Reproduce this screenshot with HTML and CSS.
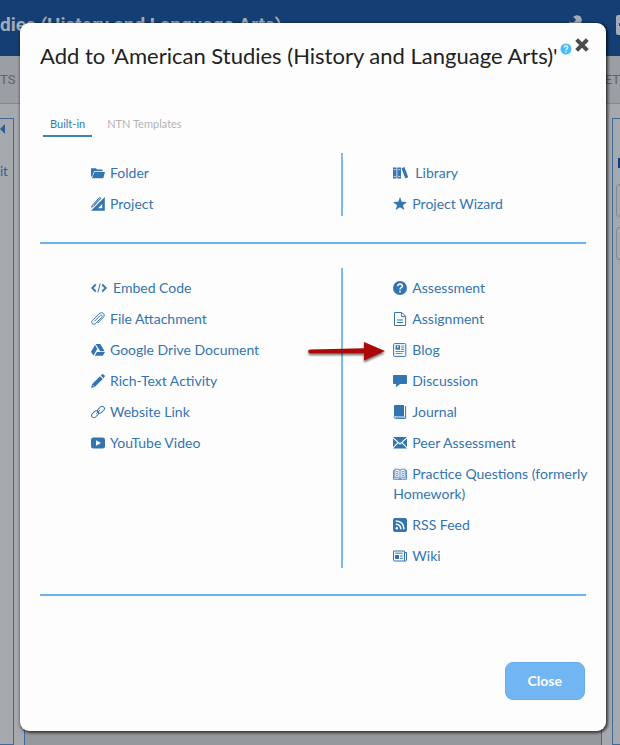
FILE: index.html
```html
<!DOCTYPE html>
<html lang="en">
<head>
<meta charset="utf-8">
<title>Add to course</title>
<link rel="stylesheet" href="styles.css">
</head>
<body>
<div class="page">
  <header class="topbar">
    <span class="course">dies (History and Language Arts)</span>
    <svg class="wrench" viewBox="0 0 18 18"><path d="M1 7Q3 9 6 8L8 6Q7 4 5 3 8 0 12 2 15 5 13 9L17 14 14 17 8 11Q2 12 1 7Z"/></svg>
    <svg class="tool" viewBox="0 0 18 20"><rect width="18" height="20" rx="2"/><path class="cut" d="M3 8h12v3H3z"/></svg>
  </header>
  <nav class="subnav"><span>TS</span><span>ET</span></nav>
  <div class="columns">
    <aside class="panel panel-left">
      <svg class="collapse" viewBox="0 0 6 12"><path d="M6 0v12L0 6z"/></svg>
      <span class="edit">it</span>
    </aside>
    <main class="panel panel-main"></main>
    <aside class="panel panel-right"><i class="mark"></i><i class="field"></i><i class="field"></i></aside>
  </div>
</div>

<div class="overlay">
  <section class="modal" role="dialog" aria-labelledby="dialog-title">
    <div class="modal-head">
      <h1 id="dialog-title">Add to 'American Studies (History and Language Arts)'</h1>
      <a class="help" href="#" aria-label="Help"><svg viewBox="0 0 12 12"><circle cx="6" cy="6" r="5.5"/><path class="line-white" d="M4.2 4.6C4.2 2.4 7.8 2.4 7.8 4.5 7.8 5.8 6 5.8 6 7.2M6 8.3v1.2"/></svg></a>
      <button class="dismiss" type="button" aria-label="Dismiss"><svg viewBox="0 0 12 12"><path d="M2 2l8 8M10 2l-8 8"/></svg></button>
    </div>

    <div class="tabs">
      <a class="tab active" href="#">Built-in</a>
      <a class="tab" href="#">NTN Templates</a>
    </div>

    <div class="group">
      <ul class="items">
        <li><a href="#"><svg class="icon" viewBox="0 0 14 14"><path d="M0 2.200h5l1 1.300h5.500v1.700H3L1.200 10.500H0z"/><path d="M3.500 6H14l-1.700 6.200H1z"/></svg>Folder</a></li>
        <li><a href="#"><svg class="icon" viewBox="0 0 14 14"><path fill-rule="evenodd" d="M13.8 0v13.8H0zM11.2 7v4.2H7z"/><path class="line" d="M.7 9.2 7.7 1.2Q9 0 10 1.2L2.7 9.2.5 10.2zM3 7.8 8.7 1.7"/></svg>Project</a></li>
      </ul>
      <ul class="items">
        <li><a href="#"><svg class="icon wide" viewBox="0 0 16 14"><path d="M0 1.500h3.500v11H0zM4.300 1.500h3.700v11H4.300zM8.500 2.200l2.900-1.200L15.200 11.300l-2.900 1.200z"/><path class="line-white thin" d="M.6 3.700h2.300M.6 10.400h2.300M5 3.700h2.300M5 10.400h2.300"/></svg>Library</a></li>
        <li><a href="#"><svg class="icon" viewBox="0 0 14 14"><path d="M7 0 8.700 4.700 14 5 9.900 8.200 11.300 13 7 10.200 2.700 13 4.100 8.200 0 5l5.300-.3z"/></svg>Project Wizard</a></li>
      </ul>
    </div>

    <div class="group">
      <ul class="items">
        <li><a href="#"><svg class="icon wide" viewBox="0 0 16 14"><path class="line bold" d="M4.800 3.500 1.200 7l3.600 3.500M11.200 3.500 14.800 7l-3.600 3.500"/><path class="line" d="M9.200 2.500 6.800 11.500"/></svg>Embed Code</a></li>
        <li><a href="#"><svg class="icon" viewBox="0 0 14 14"><path class="line" d="M3.300 9.400 9 3.700c1.400-1.400 3.100.2 1.700 1.700l-5.800 5.800c-2.600 2.600-5.800-.4-3.400-2.900L8.100 1.800c3-3 6.900.6 4.100 3.700L6.700 11"/></svg>File Attachment</a></li>
        <li><a href="#"><svg class="icon" viewBox="0 0 14 14"><path d="M4.600 1h4.700l4.300 7.300H9.200zM4 2 6.300 6 2.400 12.600 0 8.800zM6 9h8l-2.200 3.800H3.700z"/></svg>Google Drive Document</a></li>
        <li><a href="#"><svg class="icon" viewBox="0 0 14 14"><path d="M0 14l1.200-4L9 2.200 11.800 5 4 12.800zM9.800 1.400 11.200.2q.6-.4 1.200.2l1.200 1.200q.5.6 0 1.200l-1.200 1.400z"/><path class="line-white thin" d="M1.500 11l1.600 1.600"/></svg>Rich-Text Activity</a></li>
        <li><a href="#"><svg class="icon" viewBox="0 0 14 14"><g class="line"><rect x="6.200" y="2.400" width="7.600" height="4.600" rx="2.300" transform="rotate(-45 10 4.700)"/><rect x=".2" y="7" width="7.600" height="4.600" rx="2.300" transform="rotate(-45 4 9.300)"/><path d="M5.200 8.800 8.800 5.200"/></g></svg>Website Link</a></li>
        <li><a href="#"><svg class="icon" viewBox="0 0 14 14"><rect y="1.500" width="14" height="11" rx="2.500"/><path class="white" d="M5 4.200v5.600L10 7z"/></svg>YouTube Video</a></li>
      </ul>
      <ul class="items">
        <li><a href="#"><svg class="icon" viewBox="0 0 14 14"><circle cx="7" cy="7" r="7"/><path class="line-white bold" d="M4.700 5.300C4.700 2.300 9.500 2.500 9.400 5.200 9.300 6.800 7 6.700 7 8.500M7 9.800v1.600"/></svg>Assessment</a></li>
        <li><a href="#"><svg class="icon" viewBox="0 0 14 14"><path class="line" d="M1.500.5h7.300l3.800 3.800v9.200H1.500zM8.600.8v3.800h3.700M4 8h6M4 10.500h6"/></svg>Assignment</a></li>
        <li><a href="#"><svg class="icon" viewBox="0 0 14 14"><rect class="line" x=".6" y=".6" width="12.200" height="12.800" rx="1"/><path d="M2.500 2.300h4.600v4.400H2.500z"/><circle class="white" cx="4.800" cy="3.800" r=".9"/><path class="line thin" d="M8.200 3h3M8.200 4.800h3M8.200 6.500h3M2.500 8.500h8.700M2.500 10.500h7"/></svg>Blog</a></li>
        <li><a href="#"><svg class="icon" viewBox="0 0 14 14"><path d="M1 1h12q1 0 1 1v7q0 1-1 1H7l-4 3.200V10H1q-1 0-1-1V2q0-1 1-1z"/></svg>Discussion</a></li>
        <li><a href="#"><svg class="icon" viewBox="0 0 14 14"><path d="M2 0h9v11H2Q1 11 1 12V1q0-1 1-1z"/><path class="line" d="M12.600 1v12.400H2.700Q1 13.400 1 11.500M2.500 12h9"/></svg>Journal</a></li>
        <li><a href="#"><svg class="icon" viewBox="0 0 14 14"><path d="M0 1h14L7 7.200zM0 2.500 4.500 6.500 0 11zM14 2.500 9.500 6.500 14 11zM5.300 7.200 7 8.700l1.700-1.500 5.300 5.300H0z"/></svg>Peer Assessment</a></li>
        <li><a href="#"><svg class="icon" viewBox="0 0 14 14"><path class="line thin" d="M7 3Q4.800 1.400 1.800 2.200v8.600Q4.800 10 7 11.600 9.200 10 12.200 10.800V2.200Q9.200 1.400 7 3v8.600M1.800 3.500H.5v8.800h5.700L7 13l.8-.7h5.700V3.500h-1.300M3 4.500l2.600.6M3 6.500l2.600.6M3 8.500l2.600.6M11 4.500l-2.600.6M11 6.500l-2.600.6M11 8.500l-2.600.6"/></svg>Practice Questions (formerly Homework)</a></li>
        <li><a href="#"><svg class="icon" viewBox="0 0 14 14"><rect width="14" height="14" rx="2"/><circle class="white" cx="3.800" cy="10.300" r="1.200"/><path class="line-white bold" d="M2.800 6.200q4.800 0 5 5M2.800 3q8 .3 8.200 8.200"/></svg>RSS Feed</a></li>
        <li><a href="#"><svg class="icon" viewBox="0 0 14 14"><path class="line" d="M.5 2h11v10h-10Q.5 12 .5 11zM11.500 3.500h2V11q0 1-1 1h-1.300M2.200 4.200h7.500M7 7h2.800M7 9.300h2.800"/><path d="M2 6h4v4H2z"/></svg>Wiki</a></li>
      </ul>
      <svg class="pointer" viewBox="0 0 80 26"><path d="M2 8.500 56 7.300V1l21 9-21 9.500v-7.200L2 12.200a1.800 1.800 0 0 1 0-3.700z"/></svg>
    </div>

    <div class="modal-foot"><button class="close" type="button">Close</button></div>
  </section>
</div>
</body>
</html>
```

FILE: styles.css
```css
* { box-sizing: border-box; }

body {
  margin: 0;
  font-family: Lato, "Liberation Sans", sans-serif;
  background: #a5a9ae;
}

/* dimmed page behind the dialog */
.page {
  height: 100vh;
  display: flex;
  flex-direction: column;
  overflow: hidden;
}
.topbar {
  height: 56px;
  flex: none;
  display: flex;
  align-items: flex-start;
  padding-top: 14px;
  background: #153f74;
  color: #a3abb7;
  fill: #a3abb7;
}
.course {
  flex: 1;
  font: bold 19px/22px Roboto, sans-serif;
  white-space: nowrap;
}
.wrench { width: 18px; height: 18px; margin-right: 30px; }
.tool { width: 18px; height: 20px; margin: 1px -14px 0 0; }
.cut { fill: #153f74; }
.subnav {
  height: 48px;
  flex: none;
  display: flex;
  justify-content: space-between;
  align-items: center;
  background: #9b9ea2;
  border-bottom: 1px solid #85898f;
  color: #5f6368;
  font: 13px/20px Roboto, sans-serif;
}
.columns {
  flex: 1;
  display: grid;
  grid-template-columns: 14px 1fr 8px;
  gap: 10px;
  padding-top: 14px;
}
.panel { border: 1px solid #426a99; }
.panel-left {
  border-left: 0;
  display: flex;
  flex-direction: column;
  align-items: flex-start;
  gap: 26px;
  padding-top: 4px;
  color: #2a5f99;
  font-size: 13px;
  line-height: 20px;
}
.collapse { width: 5px; height: 12px; fill: #2a5f99; }
.panel-main { background: #95989c; border-bottom: 0; }
.panel-right {
  border-right: 0;
  display: flex;
  flex-direction: column;
  align-items: flex-end;
  gap: 10px;
  padding-top: 39px;
}
.mark { width: 2px; height: 10px; background: #153f74; }
.field {
  width: 4px;
  height: 33px;
  margin-top: 6px;
  border: 1px solid #85898f;
  border-right: 0;
  border-radius: 4px 0 0 4px;
}
.field + .field { margin-top: 0; }

/* dialog */
.overlay {
  position: absolute;
  inset: 0;
  padding: 23px 14px 14px 20px;
}
.modal {
  min-height: 100%;
  display: flex;
  flex-direction: column;
  padding: 20px;
  background: #fdfdfd;
  border-radius: 9px;
  box-shadow: 1px 1px 3px 1px rgba(0, 0, 0, .65);
}
.modal-head {
  display: flex;
  align-items: flex-start;
  margin-right: -4px;
}
h1 {
  margin: 0;
  font-size: 22px;
  font-weight: 400;
  line-height: 26px;
  color: #222;
  white-space: nowrap;
}
.help { margin-left: 2px; line-height: 0; }
.help svg { width: 12px; height: 12px; fill: #45bdf8; }
.dismiss {
  margin-left: auto;
  padding: 0;
  border: 0;
  background: none;
  line-height: 0;
}
.dismiss svg {
  width: 16px;
  height: 16px;
  margin: -6px 0 0;
  stroke: #4b4b4b;
  stroke-width: 3;
}

.tabs {
  display: flex;
  gap: 8px;
  margin: 44px 0 0 3px;
}
.tab {
  padding: 3px 7px;
  border-bottom: 2px solid transparent;
  color: #b3b3b3;
  font-size: 11px;
  line-height: 16px;
  text-decoration: none;
}
.tab.active {
  border-color: #3b82c4;
  color: #3279ba;
}

.group {
  position: relative;
  display: grid;
  grid-template-columns: 5fr 4fr;
  margin-top: 16px;
  padding-bottom: 26px;
  border-bottom: 2px solid #6bb1ee;
}
.group + .group { margin-top: 24px; }
.items {
  display: flex;
  flex-direction: column;
  gap: 11px;
  margin: 0;
  padding: 10px 0 2px 51px;
  list-style: none;
  font-size: 14px;
  line-height: 20px;
}
.items:first-child { border-right: 2px solid #7bb9ee; }
.items:nth-child(2) {
  margin-right: -8px;
  padding-left: 50px;
}
.items a {
  color: #3474b1;
  text-decoration: none;
}
.icon {
  width: 14px;
  height: 14px;
  margin-right: 5px;
  vertical-align: -2px;
  fill: #3474b1;
}
.icon.wide { width: 16px; margin-right: 6px; }
.line { fill: none; stroke: #3474b1; stroke-width: 1; }
.line.thin { stroke-width: .8; }
.line.bold { stroke-width: 1.8; }
.line-white { fill: none; stroke: #fff; stroke-width: 1.2; }
.line-white.thin { stroke-width: .7; }
.line-white.bold { stroke-width: 1.5; }
.white { fill: #fff; }

/* callout arrow laid over the divider */
.pointer {
  position: absolute;
  left: 49%;
  top: 73px;
  width: 80px;
  height: 26px;
  overflow: visible;
  fill: #ad0808;
  filter: drop-shadow(0 2px 1px rgba(0, 0, 0, .55));
}

.modal-foot {
  display: flex;
  justify-content: flex-end;
  margin-top: auto;
  padding: 0 1px 11px 0;
}
.close {
  padding: 9px 22px;
  border: 1px solid #68aced;
  border-radius: 8px;
  background: #71b5f3;
  color: #fff;
  font: bold 14px/18px Lato, sans-serif;
}
```
